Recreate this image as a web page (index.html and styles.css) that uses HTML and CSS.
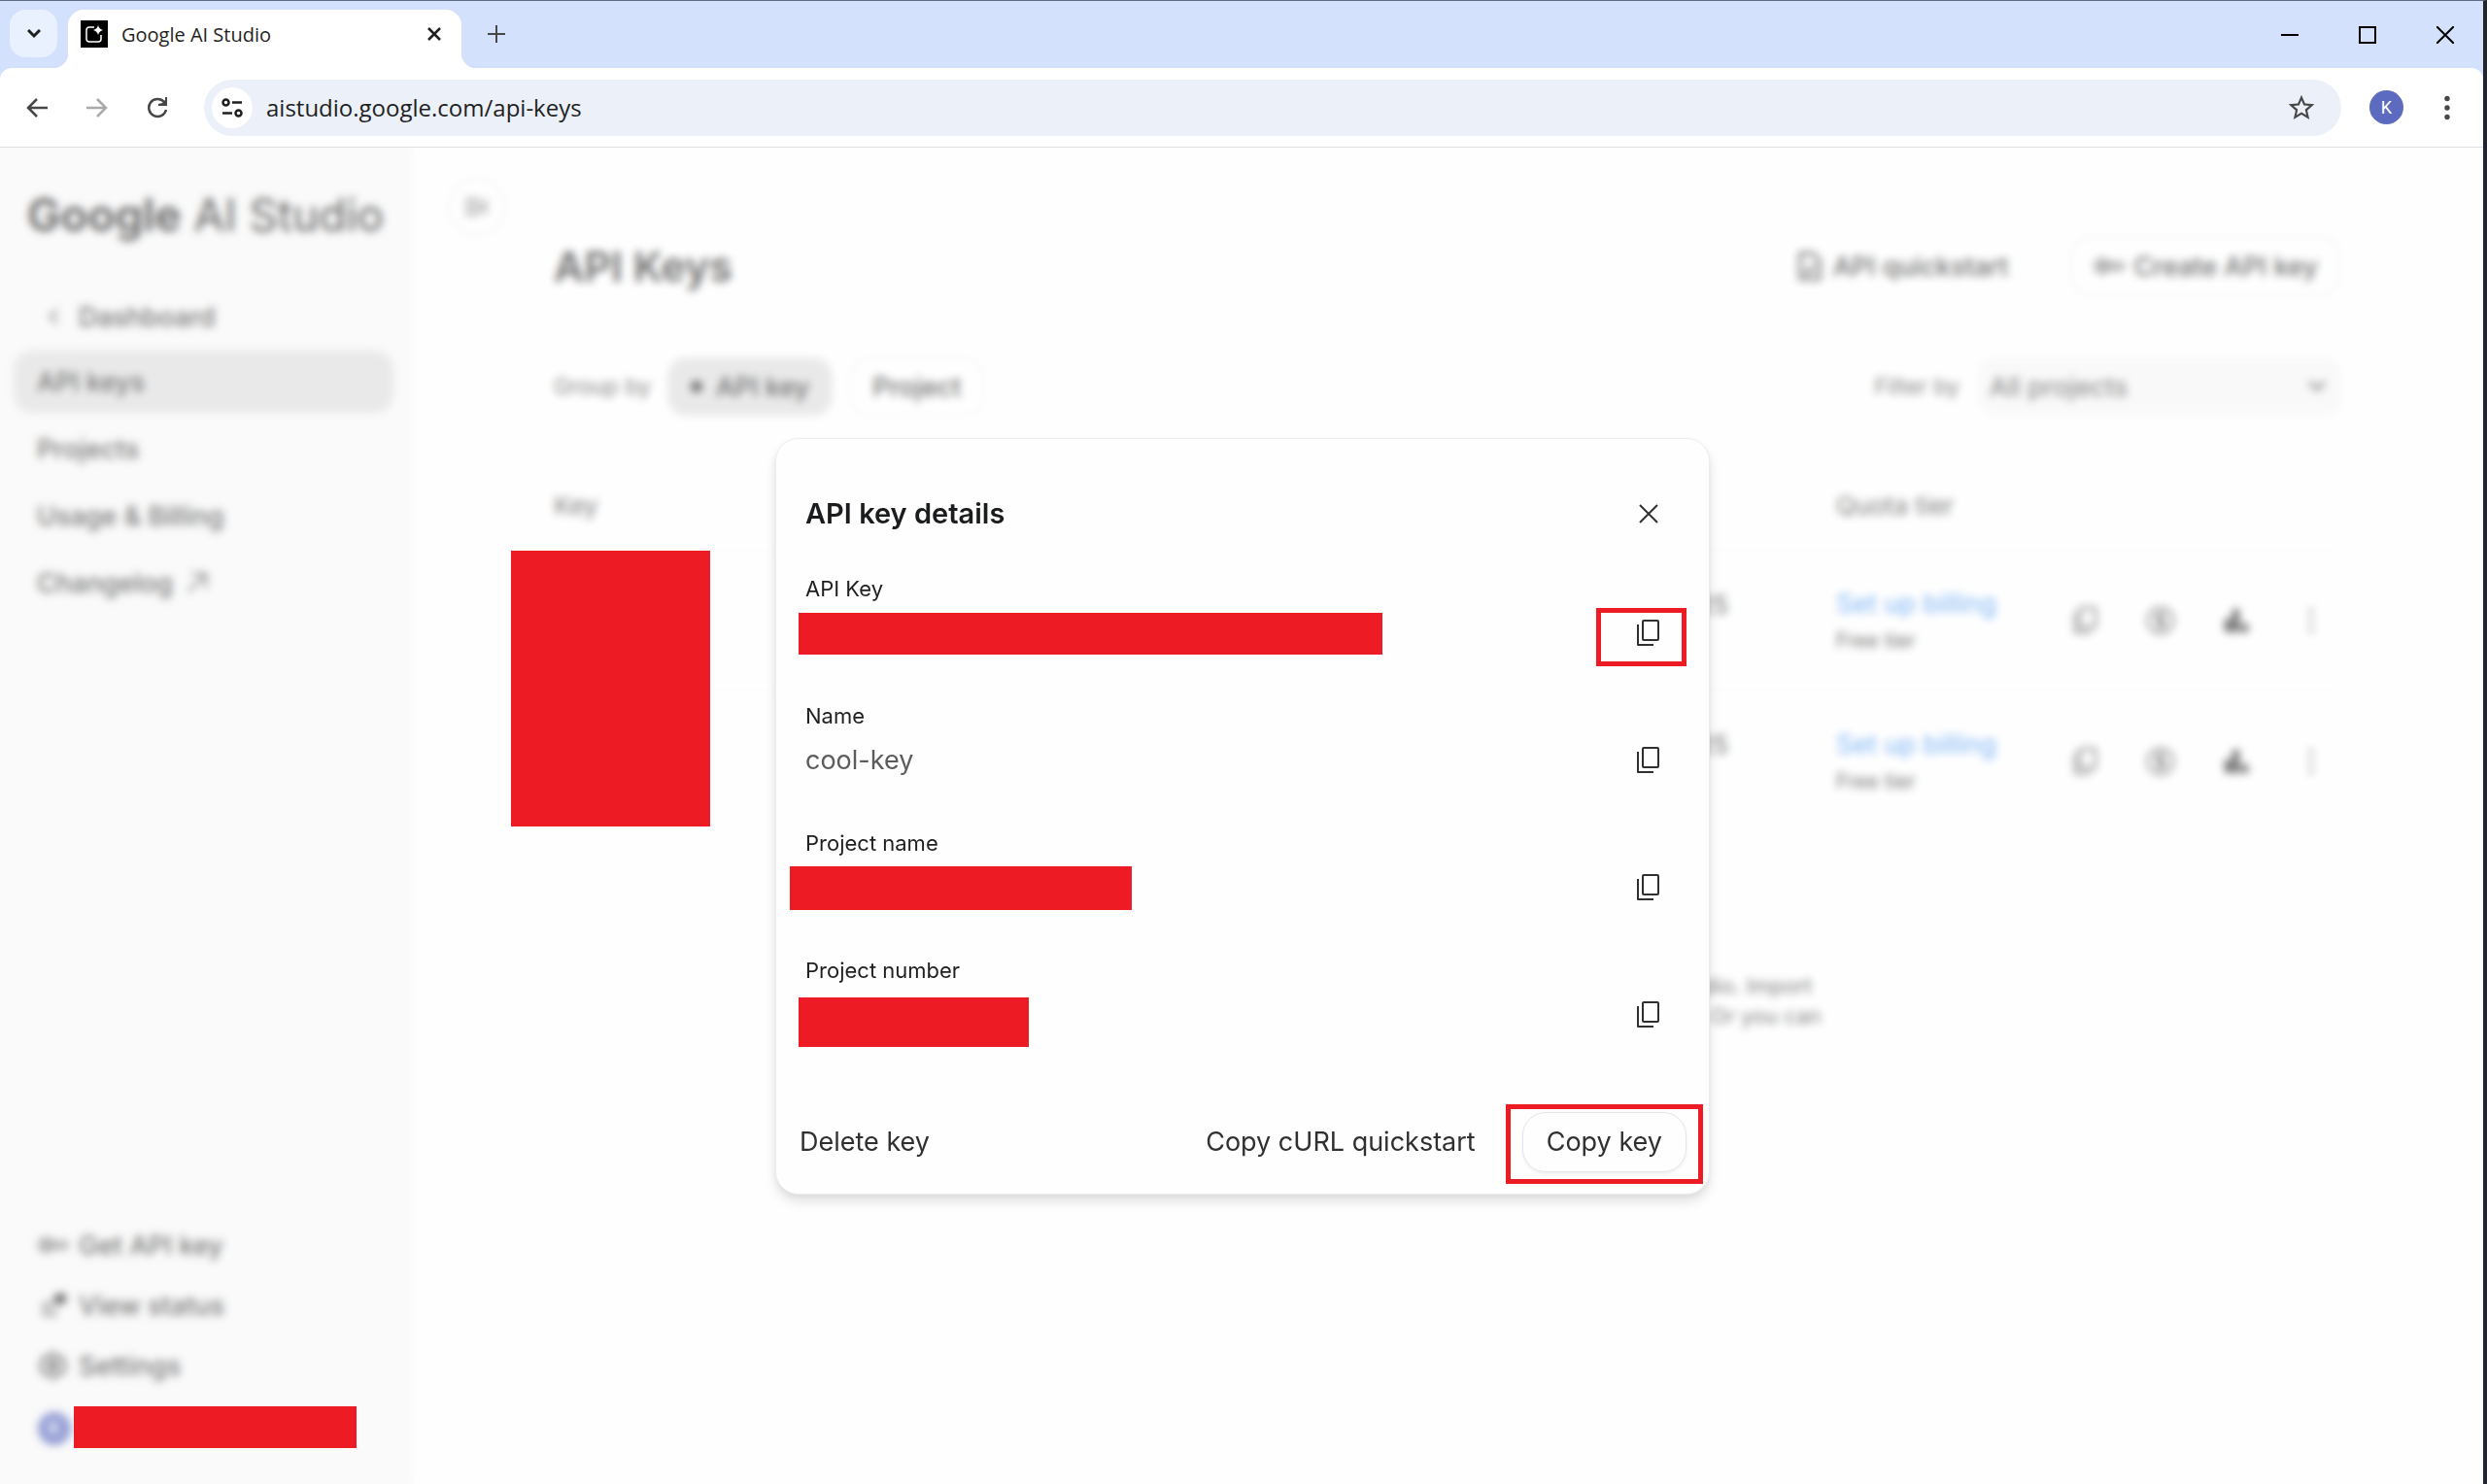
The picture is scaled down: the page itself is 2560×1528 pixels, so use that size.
FILE: index.html
```html
<!DOCTYPE html>
<html lang="en">
<head>
<meta charset="utf-8">
<meta name="viewport" content="width=device-width, initial-scale=1">
<title>Google AI Studio</title>
<link rel="stylesheet" href="styles.css">
</head>
<body>
<svg class="defs" aria-hidden="true">
  <symbol id="copy" viewBox="0 0 28 28"><g fill="none" stroke="currentColor" stroke-width="2" stroke-linejoin="round"><rect x="8" y="1" width="16" height="20" rx="1"/><path d="M3 5v21h16"/></g></symbol>
  <symbol id="key" viewBox="0 0 32 20"><g fill="none" stroke="currentColor" stroke-width="2"><circle cx="9" cy="10" r="7"/><path d="M15 7h14l2 3-4 4-3-2-3 2-2-2h-4"/></g><circle cx="9" cy="10" r="3" fill="currentColor"/></symbol>
  <symbol id="coin" viewBox="0 0 32 32"><g fill="none" stroke="currentColor" stroke-width="2"><circle cx="16" cy="16" r="13"/><path d="M20 12c-1-3-8-3-8 1s8 2 8 6-7 4-8 1M16 7v18"/></g></symbol>
  <symbol id="chart" viewBox="0 0 28 28"><path fill="currentColor" d="M2 12h7v14H2zM10 2h7v24h-7zM19 17h7v9h-7z"/></symbol>
  <symbol id="dots" viewBox="0 0 6 26"><g fill="currentColor"><circle cx="3" cy="3" r="2"/><circle cx="3" cy="13" r="2"/><circle cx="3" cy="23" r="2"/></g></symbol>
</svg>

<header class="tabstrip">
  <button class="tab-search" aria-label="Search tabs"><svg width="14" height="10" viewBox="0 0 14 10"><path d="M1 1l6 6 6-6" fill="none" stroke="#1f1f1f" stroke-width="3"/></svg></button>
  <div class="tab">
    <svg class="favicon" width="28" height="28" viewBox="0 0 28 28"><path fill="#000" d="M0 0h28v28H0z"/><path d="M14 7H9a3 3 0 0 0-3 3v9a3 3 0 0 0 3 3h9a3 3 0 0 0 3-3v-4" fill="none" stroke="#fff" stroke-width="1.500"/><path fill="#fff" d="M18 5q1 4 5 5-4 1-5 5-1-4-5-5 4-1 5-5z"/></svg>
    <span class="tab-title">Google AI Studio</span>
    <button class="plain" aria-label="Close tab"><svg width="14" height="14" viewBox="0 0 14 14"><path d="M1 1l12 12M13 1L1 13" stroke="#1f1f1f" stroke-width="2.500"/></svg></button>
  </div>
  <button class="plain new-tab" aria-label="New tab"><svg width="18" height="18" viewBox="0 0 18 18"><path d="M9 0v18M0 9h18" stroke="#474747" stroke-width="2"/></svg></button>
  <div class="window-controls">
    <button class="plain" aria-label="Minimize"><svg width="18" height="18" viewBox="0 0 18 18"><path d="M0 9h18" stroke="#000" stroke-width="2"/></svg></button>
    <button class="plain" aria-label="Maximize"><svg width="18" height="18" viewBox="0 0 18 18"><path d="M1 1h16v16H1z" fill="none" stroke="#000" stroke-width="2"/></svg></button>
    <button class="plain" aria-label="Close window"><svg width="18" height="18" viewBox="0 0 18 18"><path d="M0 0l18 18M18 0L0 18" stroke="#000" stroke-width="2"/></svg></button>
  </div>
</header>

<div class="toolbar-wrap">
<nav class="toolbar">
  <button class="plain nav-btn" aria-label="Back"><svg width="22" height="20" viewBox="0 0 22 20"><path d="M11 1l-9 9 9 9M2 10h20" fill="none" stroke="#474747" stroke-width="2.500"/></svg></button>
  <button class="plain nav-btn" aria-label="Forward"><svg width="22" height="20" viewBox="0 0 22 20"><path d="M11 1l9 9-9 9M20 10H0" fill="none" stroke="#a9a9a9" stroke-width="2.500"/></svg></button>
  <button class="plain nav-btn" aria-label="Reload"><svg width="22" height="22" viewBox="0 0 22 22"><path d="M18 5a9 9 0 1 0 2 8" fill="none" stroke="#474747" stroke-width="2.500"/><path d="M21 0v9h-9V7l4-1 3-3V0z" fill="#474747"/></svg></button>
  <div class="omnibox">
    <button class="site-info" aria-label="Site information"><svg width="22" height="20" viewBox="0 0 22 20"><g fill="none" stroke="#1f1f1f" stroke-width="2.500"><circle cx="4.500" cy="4.500" r="3"/><path d="M11 4.500h10M1 15.500h10"/><circle cx="17.500" cy="15.500" r="3"/></g></svg></button>
    <input class="url" type="text" aria-label="Address" value="aistudio.google.com/api-keys">
    <button class="plain" aria-label="Bookmark"><svg width="32" height="32" viewBox="0 0 24 24"><path fill="#474747" d="M22 9.240l-7.190-.62L12 2 9.190 8.630 2 9.240l5.460 4.730L5.820 21 12 17.270 18.180 21l-1.630-7.030L22 9.240zM12 15.400l-3.760 2.270 1-4.280-3.320-2.880 4.380-.38L12 6.100l1.710 4.040 4.380.38-3.320 2.880 1 4.280L12 15.400z"/></svg></button>
  </div>
  <button class="profile" aria-label="Profile">K</button>
  <button class="plain menu-btn" aria-label="Menu"><svg width="6" height="26" viewBox="0 0 6 26"><g fill="#474747"><circle cx="3" cy="3.500" r="2.700"/><circle cx="3" cy="13" r="2.700"/><circle cx="3" cy="22.500" r="2.700"/></g></svg></button>
</nav>
</div>

<div class="app">
  <aside class="sidebar">
    <div class="logo"><b>Google</b> AI Studio</div>
    <a class="crumb" href="#"><svg class="lead" width="26" height="16" viewBox="0 0 26 16"><path d="M16 1L9 8l7 7" fill="none" stroke="currentColor" stroke-width="2"/></svg>Dashboard</a>
    <a class="item active" href="#">API keys</a>
    <a class="item" href="#">Projects</a>
    <a class="item" href="#">Usage &amp; Billing</a>
    <a class="item" href="#">Changelog <svg width="22" height="22" viewBox="0 0 22 22"><path d="M2 20L20 2M5 2h15v15" fill="none" stroke="currentColor" stroke-width="2"/></svg></a>
    <div class="side-foot">
      <a class="tool" href="#"><svg class="lead" width="32" height="20"><use href="#key"/></svg>Get API key</a>
      <a class="tool" href="#"><svg class="lead" width="32" height="28" viewBox="0 0 32 28"><path d="M14 12H7v12h11v-7M10 19l5-4" fill="none" stroke="currentColor" stroke-width="2"/><path d="M22 1l7 1 1 8-6 4-7-2-1-6z" fill="currentColor"/></svg>View status</a>
      <a class="tool" href="#"><svg class="lead" width="30" height="30" viewBox="0 0 30 30"><path d="M15 2l4 4 6 1 1 5 2 3-2 4-1 4-6 1-4 4-4-4-6-1-1-4-2-4 2-3 1-5 6-1z" fill="none" stroke="currentColor" stroke-width="3"/><circle cx="15" cy="15" r="5" fill="currentColor"/></svg>Settings</a>
      <div class="account"><span class="account-badge">K</span></div>
    </div>
  </aside>

  <main class="main">
    <div class="rail"><button class="collapse" aria-label="Collapse menu"><svg width="26" height="20" viewBox="0 0 26 20"><path d="M1 3h15M1 10h15M1 17h15M24 4l-6 6 6 6" fill="none" stroke="currentColor" stroke-width="3"/></svg></button></div>
    <div class="content">
      <div class="heading">
        <h1>API Keys</h1>
        <button class="text-btn"><svg width="24" height="30" viewBox="0 0 24 30"><path d="M2 2h13l7 7v19H2zM7 19l3 3 7-8" fill="none" stroke="currentColor" stroke-width="3"/></svg>API quickstart</button>
        <button class="outline-btn"><svg width="32" height="20"><use href="#key"/></svg>Create API key</button>
      </div>
      <div class="filters">
        <span class="hint">Group by</span>
        <button class="chip selected" aria-pressed="true"><i></i>API key</button>
        <button class="chip" aria-pressed="false">Project</button>
        <label class="hint push" for="filter">Filter by</label>
        <div class="select"><select id="filter"><option>All projects</option></select><svg width="18" height="12" viewBox="0 0 18 12"><path d="M1 1l8 8 8-8" fill="none" stroke="currentColor" stroke-width="3"/></svg></div>
      </div>
      <table class="keys">
        <thead><tr><th>Key</th><th class="date"></th><th class="tier">Quota tier</th><th class="actions"></th></tr></thead>
        <tbody>
          <tr><td></td><td class="date">2025</td><td class="tier"><a href="#">Set up billing</a><small>Free tier</small></td><td class="actions"><div class="icons"><button aria-label="Copy"><svg width="28" height="28"><use href="#copy"/></svg></button><button aria-label="Billing"><svg width="32" height="32"><use href="#coin"/></svg></button><button aria-label="Usage"><svg width="28" height="28"><use href="#chart"/></svg></button><button aria-label="More"><svg width="6" height="26"><use href="#dots"/></svg></button></div></td></tr>
          <tr><td></td><td class="date">2025</td><td class="tier"><a href="#">Set up billing</a><small>Free tier</small></td><td class="actions"><div class="icons"><button aria-label="Copy"><svg width="28" height="28"><use href="#copy"/></svg></button><button aria-label="Billing"><svg width="32" height="32"><use href="#coin"/></svg></button><button aria-label="Usage"><svg width="28" height="28"><use href="#chart"/></svg></button><button aria-label="More"><svg width="6" height="26"><use href="#dots"/></svg></button></div></td></tr>
        </tbody>
      </table>
      <p class="note">This list only shows your projects imported into Google AI Studio. Import<br>projects to review and manage all of their associated API keys. Or you can</p>
    </div>
  </main>

  <div class="scrim">
    <section class="dialog" role="dialog" aria-labelledby="dlg-title">
      <header class="dlg-head"><h2 id="dlg-title">API key details</h2><button class="icon-btn" aria-label="Close"><svg width="20" height="20" viewBox="0 0 20 20"><path d="M1 1l18 18M19 1L1 19" stroke="currentColor" stroke-width="2"/></svg></button></header>
      <div class="fields">
        <div class="field"><h3>API Key</h3><div class="value"><span class="redact redact-key"></span><button class="icon-btn" aria-label="Copy API key"><svg width="28" height="28"><use href="#copy"/></svg></button><span class="mark mark-icon"></span></div></div>
        <div class="field"><h3>Name</h3><div class="value">cool-key<button class="icon-btn" aria-label="Copy name"><svg width="28" height="28"><use href="#copy"/></svg></button></div></div>
        <div class="field"><h3>Project name</h3><div class="value"><span class="redact redact-project"></span><button class="icon-btn" aria-label="Copy project name"><svg width="28" height="28"><use href="#copy"/></svg></button></div></div>
        <div class="field"><h3>Project number</h3><div class="value"><span class="redact redact-number"></span><button class="icon-btn" aria-label="Copy project number"><svg width="28" height="28"><use href="#copy"/></svg></button></div></div>
      </div>
      <footer class="dlg-foot">
        <button class="dlg-btn first">Delete key</button>
        <button class="dlg-btn">Copy cURL quickstart</button>
        <div class="marked"><button class="dlg-btn framed">Copy key</button><span class="mark mark-button"></span></div>
      </footer>
    </section>
  </div>
  <span class="redact redact-table"></span>
  <span class="redact redact-account"></span>
</div>
</body>
</html>
```

FILE: styles.css
```css
* { box-sizing: border-box; }
body {
  margin: 0;
  min-height: 100vh;
  display: flex;
  flex-direction: column;
  border-top: 1px solid #5f6b80;
  border-right: 4px solid #23252e;
  background: #fefefe;
  font-family: Inter, sans-serif;
  color: #1f1f1f;
}
button, input, select { font: inherit; color: inherit; }
button { display: flex; align-items: center; justify-content: center; padding: 0; border: 0; background: none; }
a { color: inherit; text-decoration: none; }
svg { flex: none; }
.defs { position: absolute; width: 0; height: 0; }
.plain { width: 40px; height: 40px; }

/* Browser chrome */
.tabstrip { display: flex; align-items: flex-start; height: 69px; padding: 9px 15px 0 10px; background: #d3e1fc; }
.tab-search { width: 49px; height: 49px; border-radius: 16px; background: #e9f0fe; }
.tab { position: relative; display: flex; align-items: center; width: 405px; height: 60px; margin-left: 11px; padding: 0 8px 10px 13px; border-radius: 16px 16px 0 0; background: #fff; font: 20px "Open Sans", sans-serif; }
.tab::before, .tab::after { content: ""; position: absolute; bottom: 0; width: 16px; height: 16px; }
.tab::before { left: -16px; background: radial-gradient(circle at 0 0, transparent 16px, #fff 17px); }
.tab::after { right: -16px; background: radial-gradient(circle at 100% 0, transparent 16px, #fff 17px); }
.tab-title { flex: 1; margin-left: 14px; }
.new-tab { margin: 5px 0 0 16px; }
.window-controls { display: flex; gap: 40px; margin: 6px 4px 0 auto; }
.toolbar-wrap { background: #d3e1fc; }
.toolbar { display: flex; align-items: center; height: 82px; padding: 0 17px 0 7px; border-bottom: 1px solid #dcdfe5; border-radius: 12px 12px 0 0; background: #fff; }
.nav-btn { width: 62px; }
.omnibox { flex: 1; display: flex; align-items: center; height: 58px; margin-left: 17px; padding: 0 21px 0 8px; border-radius: 29px; background: #ebf0f9; }
.site-info { width: 42px; height: 42px; border-radius: 50%; background: #fff; }
.url { flex: 1; min-width: 0; padding: 0; margin-left: 14px; border: 0; background: none; font: 24px "Open Sans", sans-serif; }
.profile { width: 35px; height: 35px; margin-left: 29px; border-radius: 50%; background: #5c6bc0; color: #fff; font: 18px Roboto, sans-serif; }
.menu-btn { margin-left: 25px; }

/* Page behind the dialog */
.app { position: relative; flex: 1; display: flex; }
.sidebar { display: flex; flex-direction: column; gap: 5px; width: 425px; padding: 0 20px 23px 14px; background: #f7f7f7; color: #303030; font-size: 27px; font-weight: 500; }
.logo { height: 139px; padding-left: 14px; font-size: 46px; line-height: 138px; font-weight: 400; white-space: nowrap; color: #111; }
.logo b { font-weight: 600; }
.crumb, .item, .tool { display: flex; align-items: center; }
.crumb { height: 60px; padding-left: 29px; gap: 12px; }
.item { height: 64px; padding-left: 24px; gap: 14px; border-radius: 20px; }
.active { background: #dedede; }
.side-foot { margin-top: auto; }
.tool { height: 62px; padding-left: 24px; gap: 10px; }
.tool .lead { width: 33px; }
.account { display: flex; align-items: center; height: 68px; padding-left: 25px; }
.account-badge { width: 34px; height: 34px; border-radius: 50%; background: #5c6bc0; color: #fff; font-size: 18px; line-height: 34px; text-align: center; }
.main { flex: 1; display: flex; padding-right: 146px; }
.rail { width: 145px; padding: 31px 36px; }
.collapse { width: 60px; height: 60px; border: 2px solid #ededed; border-radius: 50%; color: #666; }
.content { flex: 1; min-width: 0; padding-top: 91px; color: #242424; }
.heading { display: flex; align-items: center; height: 62px; font-size: 27px; font-weight: 500; }
h1 { flex: 1; margin: 0; font-size: 43px; font-weight: 600; }
.text-btn { gap: 12px; margin-right: 64px; }
.outline-btn { gap: 9px; height: 62px; padding: 0 22px; border: 2px solid #ededed; border-radius: 22px; }
.filters { display: flex; align-items: center; height: 60px; margin-top: 63px; font-size: 27px; font-weight: 500; }
.hint { font-size: 23px; font-weight: 400; color: #484848; }
.chip { height: 60px; padding: 0 22px; margin-left: 17px; border: 2px solid #f0f0f0; border-radius: 20px; }
.chip i { width: 12px; height: 12px; margin-right: 14px; border-radius: 50%; background: currentColor; }
.selected { border-color: #dedede; background: #dedede; }
.push { margin-left: auto; }
.select { display: flex; align-items: center; width: 374px; height: 60px; margin-left: 19px; padding-right: 16px; border-radius: 16px; background: #f6f6f6; color: #3c3c3c; font-weight: 400; }
.select select { flex: 1; padding: 0 12px; appearance: none; border: 0; background: none; }
.keys { width: 100%; margin-top: 46px; border-collapse: collapse; table-layout: fixed; font-size: 26px; }
.keys th { height: 93px; padding: 0; font-weight: 400; text-align: left; color: #3c3c3c; }
.keys td { height: 144px; padding: 0; border-top: 2px solid #f5f5f5; }
.keys .date { width: 500px; padding: 0 111px 34px 0; text-align: right; }
.keys th.tier, .keys td.tier { width: 228px; }
.keys td.tier { padding-top: 4px; }
.tier a { display: block; line-height: 38px; font-size: 27px; color: #3a8ff0; }
.tier small { display: block; line-height: 38px; font-size: 21px; color: #303030; }
.keys .actions { width: 292px; }
.icons { display: flex; justify-content: flex-end; gap: 20px; padding-right: 2px; }
.icons button { width: 58px; height: 58px; }
.note { margin: 145px 0 0; text-align: center; font-size: 22px; line-height: 31px; color: #3c3c3c; }

/* Dialog */
.scrim { position: absolute; inset: 0; display: flex; align-items: center; justify-content: center; padding-left: 2px; background: rgba(254, 254, 254, .35); backdrop-filter: blur(4px); }
.dialog { width: 962px; border: 1px solid #ededed; border-radius: 24px; padding: 47px 0 22px; background: #fefefe; box-shadow: 0 8px 12px rgba(0, 0, 0, .1), 0 2px 6px rgba(0, 0, 0, .05); color: #303030; }
.dlg-head { display: flex; align-items: center; justify-content: space-between; height: 60px; padding: 0 38px 0 30px; }
h2 { margin: 0; font-size: 29px; font-weight: 600; color: #1a1c1e; }
.icon-btn { width: 48px; height: 48px; color: #303030; }
.fields { display: flex; flex-direction: column; gap: 47px; padding: 33px 38px 0 30px; }
h3 { margin: 0 0 8px; font-size: 22px; line-height: 28px; font-weight: 400; color: #1f1f1f; }
.value { position: relative; display: flex; align-items: center; height: 48px; font-size: 27px; color: #5c5c5c; }
.value .icon-btn { margin-left: auto; }
.dlg-foot { display: flex; align-items: center; margin-top: 76px; padding-right: 23px; }
.dlg-btn { height: 62px; padding: 0 24px; font-size: 27px; color: #303030; }
.first { margin-right: auto; }
.framed { border: 1px solid #e3e5ea; border-radius: 24px; box-shadow: 0 2px 3px rgba(0, 0, 0, .06); }
.marked { position: relative; margin-left: 24px; }

/* Red cover blocks and frames lying over the page */
.redact { position: absolute; background: #ed1c24; }
.redact-key { left: -7px; top: 3px; width: 601px; height: 43px; }
.redact-project { left: -16px; top: 2px; width: 352px; height: 45px; }
.redact-number { left: -7px; top: 6px; width: 237px; height: 51px; }
.redact-table { left: 526px; top: 415px; width: 205px; height: 284px; }
.redact-account { left: 76px; bottom: 37px; width: 291px; height: 43px; }
.mark { position: absolute; border: 5px solid #ed1c24; pointer-events: none; }
.mark-icon { right: -15px; top: -2px; width: 93px; height: 60px; }
.mark-button { inset: -8px -17px -12px; }
```
